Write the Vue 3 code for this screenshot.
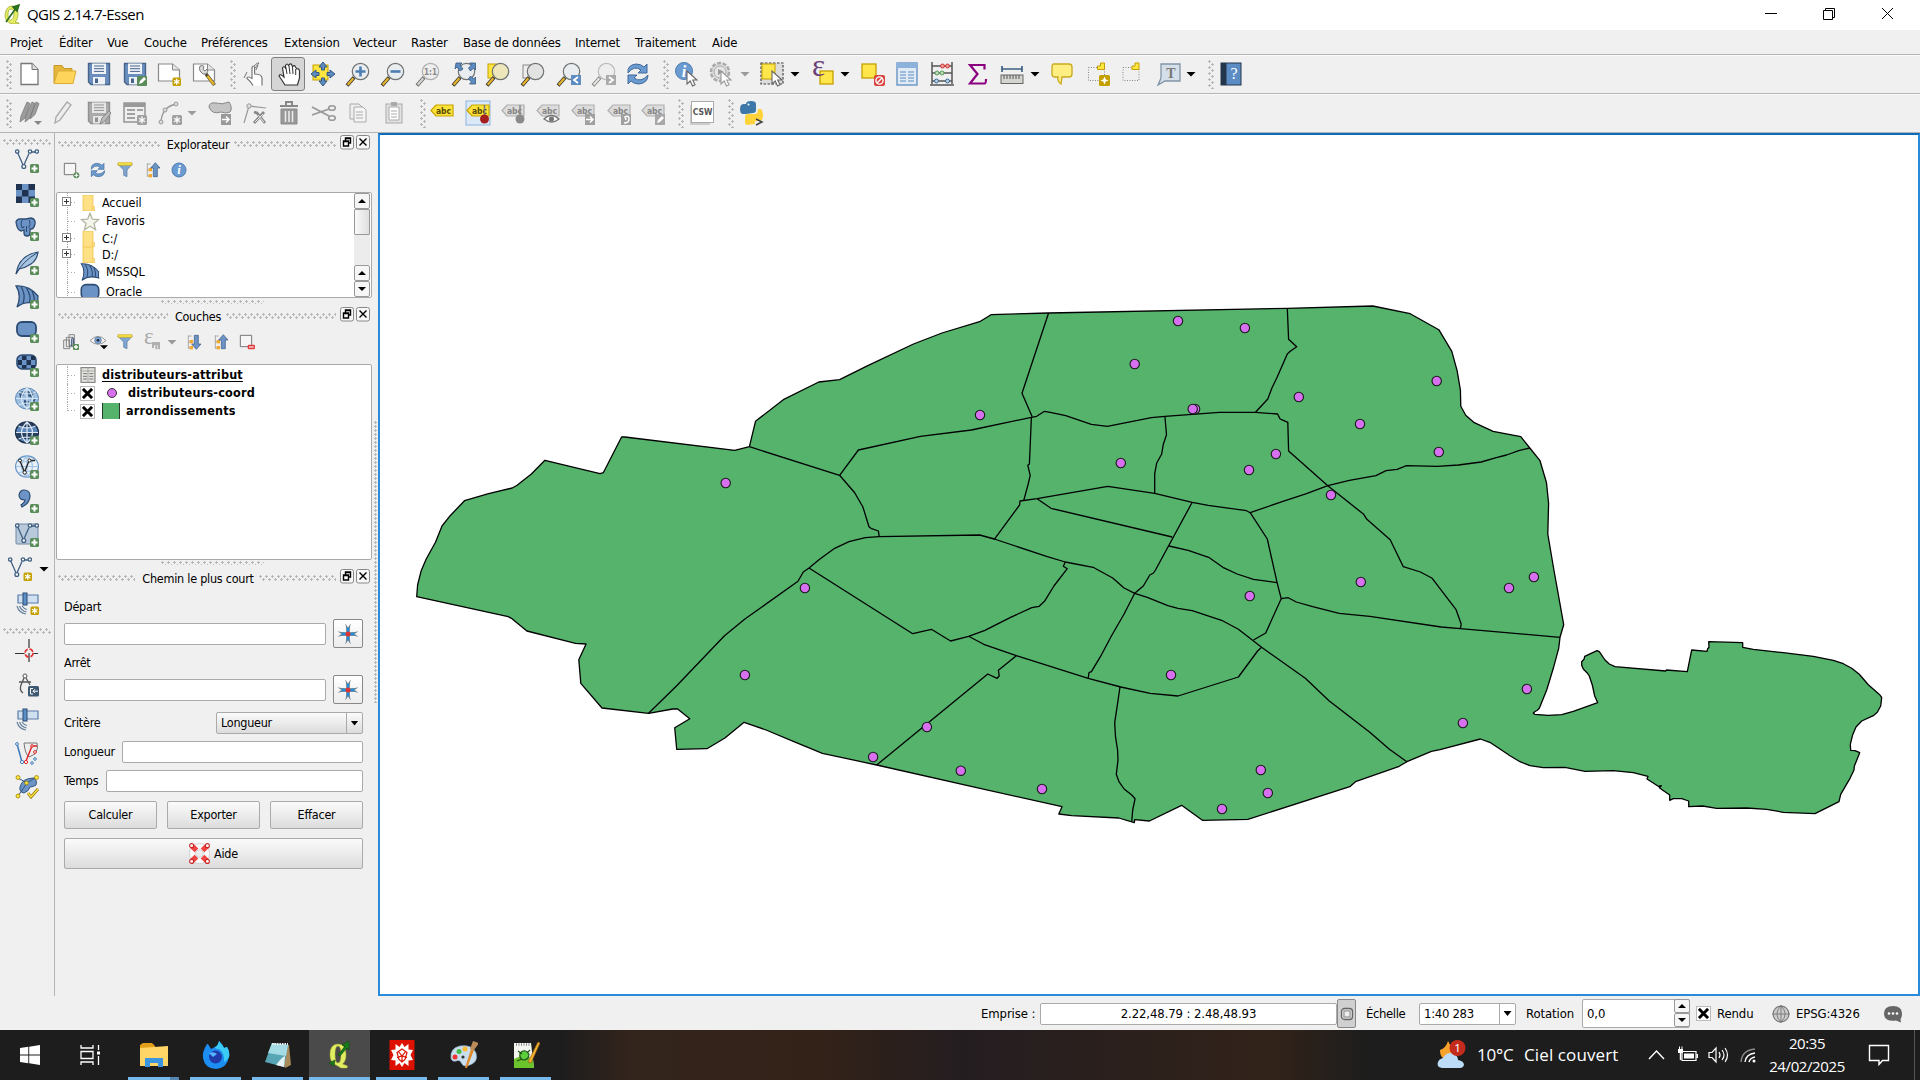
<script setup>
// ---------- map geometry ----------
// Each sheet is a digitised tile: origin on the page and horizontal / vertical scale.
const sheets = {
  A: [400, 290, 640 / 1568, 1 / 3],
  B: [980, 290, 640 / 1568, 1 / 3],
  C: [980, 540, 640 / 1568, 1 / 3],
  D: [1500, 620, 1 / 3, 1 / 3],
}
const place = (sheet, pair) => {
  const [ox, oy, sx, sy] = sheets[sheet]
  const [x, y] = pair.split(',').map(Number)
  return [+(ox + x * sx).toFixed(1), +(oy + y * sy).toFixed(1)]
}
const trace = (text) => {
  let sheet = 'A'
  const out = []
  for (const token of text.trim().split(/\s+/)) {
    if (sheets[token]) sheet = token
    else out.push(place(sheet, token).join(' '))
  }
  return 'M' + out.join('L')
}
const outline = trace(`A 41,920 43,885 52,842 64,808 74,785 87,757 103,708 123,677 158,632 217,611 275,594 287,586 322,552 355,511 490,551 498,548 543,441 551,441 820,481 856,470 871,394 939,329 1026,276 1077,269 1146,227 1258,162 1328,129 1420,95 1448,74
B 168,69 753,55 962,48 1054,71 1124,119 1156,184 1169,242 1177,300 1178,349 1190,376 1211,398 1257,424 1325,440 1347,474 1372,512 1388,578 1393,640 1391,732 1406,840
C 1430,254 1421,292
D 176,85 160,145 140,210 118,265 112,271 104,275 100,280 104,283 145,286 185,284 220,274 293,248 284,228 277,195 268,168 261,158 250,147 245,136 245,125 252,118 254,109 291,92 298,95 315,120 328,132 345,140 497,153 499,150 562,155 575,90 621,94 623,86 627,82 626,65 728,68 728,82 760,88 850,98 940,109 1000,121 1030,131 1055,145 1078,163 1105,194 1140,225 1145,233 1142,258 1132,277 1120,287 1085,303 1068,321 1058,344 1051,373 1052,391 1065,392 1079,398 1063,439 1062,450 1050,475 1022,523 1017,545 945,581 850,577 800,568 740,564 650,565 608,558 566,560 566,543 545,536 520,536 509,541 509,525 478,503 484,497 475,499 441,477 444,469 400,458 340,452 255,454 195,442 130,443 90,437 60,425 30,407 0,387
C 1249,607 1226,597 1127,629 1106,634 1046,665 1027,679 920,725 906,740 656,838 545,841 494,796 415,843 379,839 378,848 340,834 225,827 193,822 201,800 0,745
A 1168,1425 1035,1390 965,1355 897,1320 843,1297 796,1344 752,1376 678,1378 673,1313 710,1286 680,1257 668,1257 609,1270 495,1254 443,1180 438,1109 456,1062 430,1060 311,1023 273,985 265,980`) + 'Z'
const borders = [
  'A 856,470 1077,556 1114,608 1134,651 1149,710 1154,715 1172,723 1174,740',
  'A 1077,556 1123,480 1275,439 1400,420 1547,382 B 139,379 158,364 172,367 210,377 273,403 312,409 420,383 453,379 586,367 675,367 729,372 735,386 739,389 754,397 756,483 852,587 940,673 948,688 1005,749 1037,830 C 1079,96 1108,115 1166,208 1179,252 1177,265',
  'B 168,69 103,310 128,380',
  'B 753,55 756,148 776,170 760,184 753,192 728,262 715,295 705,327 675,367',
  'B 126,382 121,522 117,526 123,556 118,582 107,632',
  'B 453,379 457,434 449,463 445,493 433,519 428,551 428,610',
  'B 35,748 97,645 98,633 140,626 313,589 428,610 520,637 559,646 653,662 662,668 742,634 800,611 852,587 905,571 970,557 995,542 1022,538 1045,527 1120,529 1172,525 1228,516 1265,503 1290,495 1320,482 1347,474',
  'B 140,626 174,655 471,741',
  'B 520,637 430,840 C 425,99 416,105 400,138 379,160 353,222 322,288 295,350 273,395 267,398 265,415',
  'B 662,668 704,747 728,878 C 738,176 700,279 670,300',
  'C 463,18 510,31 560,52 595,82 630,102 670,118 728,128',
  'A 609,1270 678,1187 795,1037 845,987 975,874 988,846 1002,834 1028,808 1065,775 1100,755 1140,743 1174,740 1420,735 1456,747 C 165,50 209,66 277,82 325,114 353,144 379,160 410,172 460,197 485,205 520,212 592,241 633,268 690,322 797,415 855,482 955,577 1003,628 1046,665',
  'C 209,66 204,79 214,86 181,138 158,184 145,199 127,203 75,232 12,271 A 1393,1039 1349,1053 1302,1018 1256,1031 1002,834',
  'A 1393,1039 1430,1063 1510,1097 C 265,415 345,441 417,460 485,468 633,411 680,333 690,322',
  'A 1510,1097 1466,1141 1468,1158 1463,1165 1440,1152 1168,1425',
  'C 343,441 336,500 330,548 332,590 337,630 338,660 334,703 340,724 353,747 372,765 380,776 374,810 372,843',
  'C 738,176 755,173 775,186 815,200 880,220 955,229 1130,261 1177,266 1421,292',
].map(trace)
const dots = Object.entries({
  A: '1421,375 798,579 992,894 845,1155 1291,1311 1159,1401 1374,1442',
  B: '485,93 649,114 379,222 527,357 521,357 781,321 1119,273 931,402 1124,486 725,492 659,540 345,519 860,615',
  C: '661,168 933,126 1296,144 1357,111 1340,447 1183,549 468,405 688,690 705,759 593,807 152,747',
}).flatMap(([s, list]) => list.split(' ').map((p) => place(s, p)))

// ---------- icons (24 × 24 grid) ----------
const cross = '<rect x="15" y="15" width="9" height="9" rx="1.5" fill="#5a8c5a"/><path d="M19.5 16.5v6M16.500 19.5h6" stroke="#fff" stroke-width="2"/>'
const gold = '<rect x="15.500" y="15.500" width="8.500" height="8.500" rx="1.500" fill="#c4a000"/><path d="M19.700 16.700v6M17 18.200l5.400 3M22.400 18.200l-5.400 3" stroke="#fff" stroke-width="1.300"/>'
const grayStar = '<rect x="14" y="14" width="10" height="10" rx="1.5" fill="#a0a0a0"/><path d="M19 15.500v7M16 17.200l6 3.600M22 17.200l-6 3.600" stroke="#fff" stroke-width="1.300"/>'
const lens = (fill = '#e9edef', rim = '#6f7472', grip = '#e8b52c') =>
  `<path d="M1 23.500L8 15.500" stroke="#3c3c32" stroke-width="3.800"/><path d="M1.700 22.700L7.300 16.300" stroke="${grip}" stroke-width="2.100"/><circle cx="14.500" cy="9.500" r="8.200" fill="${fill}" stroke="${rim}" stroke-width="1.200"/>`
const arrowCursor = '<path d="M12 9v13l3.200-3 2.300 5 2.500-1.200-2.300-4.800h4.300z" fill="#fff" stroke="#666" stroke-width="1.100"/>'
const label = (fill, edge, ink) =>
  `<path d="M1 9.500L6 4h17v11H6z" fill="${fill}" stroke="${edge}" stroke-width="1.200"/><text x="13.500" y="12.700" text-anchor="middle" font-family="DejaVu Sans" font-weight="700" font-size="8.500" fill="${ink}">abc</text>`
const grayLabel = label('#dcdcdc', '#b0b0b0', '#858585')
const vline = (ink) =>
  `<path d="M2.500 3.500L8.500 17L14 4.500M16 3h5" fill="none" stroke="${ink}" stroke-width="1.300"/><g fill="#fff" stroke="${ink}" stroke-width="1.300"><circle cx="2.200" cy="2.500" r="1.700"/><circle cx="8.800" cy="17.500" r="1.900"/><circle cx="15" cy="2.500" r="1.700"/><circle cx="21.800" cy="2.500" r="1.700"/></g>`
const dish = '<path d="M3 4h20v8H3z" fill="#cfe0f0" stroke="#5b7da8" stroke-width="1.200"/><rect x="8" y="2" width="4" height="12" fill="#5b8fc6" stroke="#2c4b73"/><path d="M2 15q2 7 9 8M4.500 15q2 5 7 6M7 15q2 3 5 3.500" fill="none" stroke="#66809c" stroke-width="1.200"/>'
const disk = (a, b, c) =>
  `<path d="M1.500 1.500h21v21H4l-2.500-2.500z" fill="${a}" stroke="${b}" stroke-width="1.400"/><rect x="5" y="1.500" width="14" height="10.500" fill="${c}"/><path d="M7 4h10M7 6.700h10M7 9.400h10" stroke="${b}"/><rect x="6" y="15" width="12" height="7.500" fill="${c}"/><rect x="8" y="16.500" width="3" height="4.500" fill="${b}"/>`
const sheet = '<path d="M1.500 2h14l7 6v11h-21z" fill="#fff" stroke="#888" stroke-width="1.200"/><path d="M15.500 2v6h7" fill="#e4e4e4" stroke="#888"/>'
const elephant = '<path d="M1 5q1-4 6-3l4 0 5-1q5 1 4 6-1 4-3 5l-2 0v4q0 3-3 3-3 0-3-3l0-3-3 1q-4-1-5-9z" fill="#6b93c5" stroke="#2c4b73" stroke-width="1.300"/><path d="M7 3q-2 4 0 8 2 0 2-2M14.500 3q1.500 5-1 8M11.500 9v6" fill="none" stroke="#2c4b73"/>'
const sail = '<path d="M1 1q13-1 22 10-.500 5 0 8-13-4-21 3 5-12-1-21z" fill="#6b93c5" stroke="#2c4b73" stroke-width="1.300"/><path d="M6 1.500q5 8 2 17M11.500 3q5 8 3 14.500M17 6q3 6 2 11.500" fill="none" stroke="#2c4b73" stroke-width="1.300"/>'
const globeLines = (ink) =>
  `<path d="M12 1v21M1 11.500h22M3.500 5q8.500 4 17 0M3.500 18q8.500-4 17 0M12 1q-11 10.500 0 21M12 1q11 10.500 0 21" fill="none" stroke="${ink}" stroke-width="1.200"/>`
const funnel = '<path d="M1 3h22l-8 9v10l-5-2v-8z" fill="#7fa6d1" stroke="#53779f"/><path d="M1.500 1h21v4h-21z" fill="#f5e14a" stroke="#c4a000" stroke-width=".8"/>'
const refresh = '<path d="M2 11Q1 3 10 2q5 0 8 3l3-3v9h-9l3-3q-7-5-13 3z" fill="#6b9bd0" stroke="#41699a"/><path d="M22 13q0 8-9 9-5 0-8-3l-3 3v-9h9l-3 3q7 5 14-3z" fill="#6b9bd0" stroke="#41699a"/>'
const treeLines = '<path d="M5 2v20M5 3h5M5 12h5M5 21h5" stroke="#888" fill="none"/><g fill="#f4a82e"><rect x="7" y="9" width="5" height="5"/><rect x="7" y="18" width="5" height="5"/></g>'
const table = (line, bg, head) =>
  `<rect x="2" y="1" width="20" height="22" fill="${bg}" stroke="${line}" stroke-width="1.300"/><rect x="2" y="1" width="20" height="5" fill="${head}"/><path d="M5 10h6M13 10h6M5 13h6M13 13h6M5 16h6M13 16h6M5 19h6M13 19h6" stroke="${line}"/>`
const icons = {
  new: '<path d="M4 1.500h11l6 6v15H4z" fill="#fff" stroke="#777" stroke-width="1.300"/><path d="M15 1.500v6h6" fill="#ddd" stroke="#777"/>',
  open: '<path d="M2 21V3.500h8l2 3h8v4" fill="#e6b63a" stroke="#c69a28"/><path d="M2 21.500L6 9h18l-3 12.500z" fill="#ffd45a" stroke="#d9ad35"/>',
  save: disk('#6a8fbe', '#48648b', '#eef2f6'),
  saveas: disk('#6a8fbe', '#48648b', '#eef2f6') + '<rect x="14" y="14" width="10" height="10" rx="1" fill="#5a8c5a"/><path d="M16 22l1-3 4-4 2 2-4 4z" fill="#fff"/>',
  composer: sheet + gold,
  manager: sheet + '<path d="M9 5q3-1 4 .500l-1 3 2 1.500 2-2q2 3-1 5l-3 0-3-3q-1-3 0-5z" fill="#ddd" stroke="#777" transform="translate(-1 -1)"/><path d="M14 12l8.500 11" stroke="#55503a" stroke-width="3.600"/><path d="M15.500 14l6.500 8.500" stroke="#e8b52c" stroke-width="2.200"/>',
  touch: '<path d="M10 23.500q-2-4-6-7 0-3 5 0V5.500q1.200-3 2.600 0V12q7 0 7.400 4v7.500" fill="#fff" stroke="#777" stroke-width="1.200"/><path d="M11 4q4-4 5-3l-4 5M4 10L1 16M13 8l2-5" stroke="#777" fill="none"/>',
  hand: '<path d="M9 23q-3-5-6-9 1-3 5 1L6.500 6q1-2.500 3 0L9.500 3.500q1.500-3 3 0l.500-.500q2-2.500 3 .500l.500 1q2-2 3 .500l1.500 2q2-1 2.500 2v7l-2 7z" fill="#fff" stroke="#333" stroke-width="1.200"/><path d="M9.800 5l1.200 7M13 4l1 8M16.500 5l.500 7M19.700 7v6" stroke="#333"/>',
  panto: '<rect x="2" y="3" width="15" height="15" fill="#ffe640" stroke="#c4a000"/><path d="M12 0l4 5h-2.500v3h-3V5H8zM12 24l4-5h-2.500v-3h-3v3H8zM0 12l5-4v2.500h3v3H5V16zM24 12l-5-4v2.500h-3v3h3V16z" fill="#5d8cc2" stroke="#33567f"/>',
  zin: lens() + '<path d="M14.500 4.500v10M9.500 9.500h10" stroke="#4d7db3" stroke-width="2.600"/>',
  zout: lens() + '<path d="M9.500 9.500h10" stroke="#4d7db3" stroke-width="2.600"/>',
  z11: '<g opacity=".75">' + lens('#ededed', '#999', '#ccc') + '</g><text x="14.500" y="12.500" text-anchor="middle" font-family="DejaVu Sans" font-weight="700" font-size="8" fill="#888">1:1</text>',
  zfull: lens() + '<path d="M4 1h6L8 3l3 4-3 2-3-4-2 2zM23.500 1v7l-2-2-3 3-2-3 3-3-2-2zM23.500 22v-7l-2 2-3-3-2 3 3 3-2 2z" fill="#5d8cc2" stroke="#33567f" stroke-width=".8"/>',
  zsel: '<rect x="2" y="2" width="13" height="14" fill="#ffe640" stroke="#c4a000"/>' + lens('#eee6bb'),
  zlay: '<rect x="2" y="3" width="13" height="13" fill="#eee" stroke="#888"/>' + lens('#e2e2e2'),
  zlast: lens() + '<rect x="14" y="13" width="10" height="10" fill="#5d8cc2"/><path d="M21 15l-4 3 4 3" fill="none" stroke="#fff" stroke-width="1.800"/>',
  znext: '<g opacity=".6">' + lens('#eee', '#999', '#ddd') + '</g><rect x="14" y="13" width="10" height="10" fill="#aaa"/><path d="M17 15l4 3-4 3" fill="none" stroke="#fff" stroke-width="1.800"/>',
  refresh,
  identify: '<circle cx="9" cy="9" r="8.500" fill="#6b9bd0" stroke="#4d7db3"/><text x="9" y="14.500" text-anchor="middle" font-family="Liberation Serif" font-style="italic" font-weight="700" font-size="16" fill="#fff">i</text>' + arrowCursor,
  action: '<circle cx="11" cy="10" r="9" fill="#ddd" stroke="#aaa" stroke-width="2.500" stroke-dasharray="4 1.600"/><circle cx="11" cy="10" r="6" fill="#e6e6e6" stroke="#aaa"/><path d="M9 7l6 3-6 3z" fill="#999"/>' + arrowCursor.replace('#666', '#999'),
  select: '<rect x="1" y="1" width="22" height="21" fill="#ddd" stroke="#444" stroke-width="1.200" stroke-dasharray="2.500 1.500"/><rect x="2" y="2" width="13" height="15" fill="#ffe64a" stroke="#c4a000"/>' + arrowCursor,
  expr: '<rect x="9" y="9" width="13" height="13" fill="#ffe64a" stroke="#c4a000" stroke-width="1.300"/><text x="1" y="14" font-family="Liberation Serif" font-size="31" fill="#6b4177">ε</text>',
  desel: '<rect x="1" y="2" width="14" height="14" fill="#ffe64a" stroke="#c4a000" stroke-width="1.300"/><rect x="13" y="13" width="11" height="11" rx="2" fill="#d8433f"/><circle cx="18.500" cy="18.500" r="3.600" fill="none" stroke="#fff" stroke-width="1.400"/><path d="M16 21l5-5" stroke="#fff" stroke-width="1.400"/>',
  table: table('#5d8cc2', '#dfeaf5', '#8db3dc'),
  abacus: '<path d="M2 0v22M22 0v22M0 23h24M2 4h20M2 11h20M2 19h20" stroke="#555" stroke-width="1.500"/><g fill="#e99" stroke="#c33"><circle cx="12.500" cy="4" r="2"/><circle cx="17.500" cy="4" r="2"/></g><g fill="#bdb" stroke="#5a9a5a"><circle cx="7" cy="11" r="2"/><circle cx="12" cy="11" r="2"/></g><g fill="#bcd" stroke="#37699a"><circle cx="6.500" cy="19" r="2"/><circle cx="17.500" cy="19" r="2"/></g>',
  sum: '<path d="M19.500 7.500V3H5L12.500 12 5 21.500h14.500q1.500 0 1.500-4.500" fill="none" stroke="#8a007f" stroke-width="2.200"/>',
  ruler: '<path d="M2 4v6M22 4v6M2 7h20" stroke="#3d5f80" stroke-width="1.700"/><rect x="1" y="13" width="22" height="8.500" fill="#d5d5cf" stroke="#666"/><path d="M4 13v4M7 13v4M10 13v4M13 13v4M16 13v4M19 13v4" stroke="#555"/>',
  tip: '<path d="M5 2h15q3 0 3 3v7q0 3-3 3h-7l-1 7q-4-3-3-7H6q-3 0-3-3V5q0-3 2-3z" fill="#ffee82" stroke="#c9a81c" stroke-width="1.300"/>',
  bm1: '<rect x="2.500" y="5.500" width="16" height="13" fill="none" stroke="#888" stroke-dasharray="1 1.500"/><path d="M18.500 1h-4v3h-3v3.500h7z" fill="#ffe640" stroke="#c4a000"/><rect x="13" y="13" width="11" height="11" rx="1.500" fill="#c4a000"/><path d="M18.500 14.500l1.300 3 3 1-3 1-1.300 3-1.300-3-3-1 3-1z" fill="#fff"/>',
  bm2: '<rect x="4" y="5.500" width="16" height="13" fill="none" stroke="#888" stroke-dasharray="1 1.500"/><path d="M20 1h-4v3h-3v3.500h7z" fill="#ffe640" stroke="#c4a000"/>',
  note: '<path d="M4 2h19v17H8l-7 4 3-7z" fill="#d5dfe9" stroke="#8294a6" stroke-width="1.300"/><text x="14" y="15.500" text-anchor="middle" font-family="Liberation Serif" font-weight="700" font-size="14" fill="#777">T</text>',
  help: '<rect x="2" y="1" width="20" height="22" fill="#5c8cc4" stroke="#24364c"/><rect x="2" y="1" width="5.500" height="22" fill="#24364c"/><text x="15" y="17" text-anchor="middle" font-family="Liberation Serif" font-size="16" fill="#fff">?</text>',
  pencils: '<path d="M2 21l1-6L9 1l3 1.500L7 17zM7 21l1-6L14 1l3 1.500L12 17zM12 18l1-4L18 1l3 1.500-4 11z" fill="#9c9c9c" stroke="#7c7c7c" stroke-width=".8"/><path d="M16 20h8l-4 4z" fill="#888"/>',
  pencil: '<path d="M4 22l1-6L16 1l4 3L9 19z" fill="#eee" stroke="#aaa" stroke-width="1.300"/>',
  gsave: disk('#aaa', '#909090', '#e6e6e6') + '<path d="M13 23l2-6 7-7 2 2-6 8z" fill="#bbb" stroke="#888"/>',
  gtable: '<rect x="1" y="2" width="21" height="19" fill="#eee" stroke="#888" stroke-width="1.300"/><rect x="1" y="2" width="21" height="4" fill="#999"/><path d="M4 9h8M14 9h6M4 13h8M4 17h8" stroke="#888" stroke-width="1.500"/>' + grayStar,
  node: '<path d="M3 21Q4 6 18 3" fill="none" stroke="#999" stroke-width="1.300"/><g fill="#ddd" stroke="#999"><circle cx="3" cy="21" r="2"/><circle cx="7" cy="9" r="2"/><circle cx="18" cy="3" r="2"/></g>' + grayStar,
  move: '<path d="M1 6q0-5 7-4 6 2 13-1 4 6 1 10-4 2-9 0-9 3-12-5z" fill="#c4c4c4" stroke="#888"/><rect x="13" y="13" width="10" height="11" fill="#999"/><path d="M14 18.500h7M18 15.500l3 3-3 3" fill="none" stroke="#fff" stroke-width="1.500"/>',
  nodes: '<path d="M1 22L6 5l17 2" stroke="#999" fill="none" stroke-width="1.200"/><circle cx="6" cy="5" r="2.200" fill="#ddd" stroke="#999"/><path d="M11 11l3 1 8 10M21 11L11 22" stroke="#888" stroke-width="2.800" fill="none"/><path d="M15 14l6 7M20 13l-8 8" stroke="#e4e4e4" fill="none"/>',
  trash: '<path d="M3 5h18M9 4V1h6v3" fill="none" stroke="#888" stroke-width="2"/><path d="M4 8h16v15H4z" fill="#999" stroke="#8a8a8a"/><path d="M8.500 10v11M12 10v11M15.500 10v11" stroke="#eee" stroke-width="1.500"/>',
  cut: '<path d="M0 6l17 9M0 14l17-6" stroke="#999" stroke-width="1.800"/><g fill="none" stroke="#999" stroke-width="1.600"><ellipse cx="20" cy="7" rx="3.300" ry="2.300"/><ellipse cx="20" cy="17" rx="3.300" ry="2.300"/></g>',
  copy: '<path d="M4 3h9l3 3v12H4z" fill="#eee" stroke="#aaa"/><path d="M8 6h9l3 3v12H8z" fill="#f5f5f5" stroke="#aaa"/><path d="M10 11h7M10 14h7M10 17h7" stroke="#aaa"/>',
  paste: '<rect x="4" y="3" width="16" height="19" fill="#e2e2e2" stroke="#aaa"/><rect x="9" y="1" width="6" height="4" fill="#aaa"/><path d="M7 6h10v13H7z" fill="#fff" stroke="#aaa"/><path d="M9 10h6M9 13h6M9 16h6" stroke="#aaa"/>',
  lab1: label('#fbe33a', '#c9a400', '#5a4a00'),
  lab2: '<rect x="0" y="0" width="24" height="24" fill="#dbe8f7" stroke="#8bb3e0"/>' + label('#fbe33a', '#c9a400', '#5a4a00') + '<path d="M18.500 4v12" stroke="#777" stroke-width="1.500"/><circle cx="18.500" cy="18" r="4.500" fill="#a51d1d"/>',
  lab3: grayLabel + '<path d="M19 4v12" stroke="#888" stroke-width="1.500"/><circle cx="19" cy="18" r="4.500" fill="#8b8b8b"/>',
  lab4: grayLabel + '<path d="M8 18q7-7 15 0-7 6-15 0z" fill="#fff" stroke="#777" stroke-width="1.300"/><circle cx="15.500" cy="18" r="2.600" fill="#777"/>',
  lab5: grayLabel + '<rect x="14" y="13" width="10" height="11" fill="#a0a0a0"/><path d="M15 18.500h7M19 15.500l3 3-3 3" fill="none" stroke="#fff" stroke-width="1.500"/>',
  lab6: grayLabel + '<rect x="14" y="13" width="10" height="11" fill="#a0a0a0"/><path d="M17 22q5 0 5-4t-4-2l1 3" fill="none" stroke="#fff" stroke-width="1.500"/>',
  lab7: grayLabel + '<rect x="14" y="13" width="10" height="11" fill="#a8a8a8"/><path d="M16 22l1-3 4-4 2 2-4 4z" fill="#fff"/>',
  csw: '<rect x="0" y="4" width="20" height="20" fill="#ccc"/><rect x="1.500" y="0.500" width="22" height="21" fill="#fff" stroke="#aaa"/><text x="12.500" y="14" text-anchor="middle" font-family="DejaVu Sans Condensed" font-weight="700" font-size="8.500" fill="#555">CSW</text>',
  python: '<path d="M6 12H3q-3 0-3-5t4-5h2q0-3 5-3t5 3v6q0 3-3 3z" fill="#3d78a9" transform="translate(0 1)"/><circle cx="8.500" cy="3.400" r="1" fill="#fff"/><path d="M7 24q-2 0-2-3v-5q0-3 3-3h7q3 0 3-5h3q2 2 2 7t-4 5h-4v3z" fill="#ffd43b"/><path d="M16 18l6 3-6 3" fill="none" stroke="#444" stroke-width="1.500"/>',
  vec: vline('#3f5f83') + cross,
  ras: '<path d="M1 1h19v19H1z" fill="#6b93c5"/><path d="M1 1h6v6H1zM13.500 1H20v6h-6.500zM7 7h6.500v6.500H7zM1 13.500h6V20H1zM13.500 13.500H20V20h-6.500z" fill="#1f3350"/>' + cross,
  pg: elephant + cross,
  feather: '<path d="M1 23Q4 4 23 1q-1 8-7 12T4 18z" fill="#a8c5e2" stroke="#2c4b73" stroke-width="1.200"/><path d="M1 23Q8 10 22 2" stroke="#2c4b73" fill="none"/>' + cross,
  sail: sail + cross,
  sailPlain: sail,
  ora: '<rect x="2" y="3" width="19" height="14" rx="5" fill="#6b93c5" stroke="#2c4b73" stroke-width="1.800"/>' + cross,
  oraPlain: '<rect x="1" y="2" width="22" height="18" rx="6" fill="#6b93c5" stroke="#2c4b73" stroke-width="2"/>',
  oraRas: '<rect x="2" y="2" width="19" height="14" rx="5" fill="#6b93c5" stroke="#2c4b73" stroke-width="1.600"/><path d="M7 3h4.500v4H7zM16 3h4v4h-4zM3 7h4v5H3zM11.500 7H16v5h-4.500zM7 12h4.500v3.500H7zM16 12h4v3h-4z" fill="#1f3350"/>' + cross,
  wms: '<ellipse cx="12" cy="11.500" rx="11.500" ry="10.500" fill="#9dbfe0" stroke="#5b86b5"/><path d="M4 5l6-1-2 5-3 2zM12 4l7 1-2 6-4-2zM9 13l5 1-2 6-3-3zM18 13l3-2-2 5z" fill="#33557d"/>' + globeLines('#d7e6f4') + cross,
  wcs: '<ellipse cx="12" cy="11.500" rx="11.500" ry="10.500" fill="#5d86b8" stroke="#1f3350" stroke-width="1.500"/><path d="M4 4q8-5 16 0l1 2H3zM1 12h22q-1 4-3 6H4q-3-3-3-6z" fill="#1f3350" opacity=".85"/>' + globeLines('#dce8f4') + cross,
  wfs: '<ellipse cx="12" cy="11.500" rx="11.500" ry="10.500" fill="#e8f0f8" stroke="#6d9bcc" stroke-width="1.300"/>' + globeLines('#a4c3e3') + '<path d="M5 6l4.500 11L14 6M15 5.500h5" fill="none" stroke="#222" stroke-width="1.300"/><g fill="#fff" stroke="#222"><circle cx="5" cy="5.500" r="1.500"/><circle cx="9.700" cy="17.500" r="1.700"/><circle cx="14.500" cy="5.500" r="1.500"/></g>' + cross,
  comma: '<path d="M4 6q1-5 5-5 6 0 6 6 0 7-8 11l-1-2q4-3 4-5-6 0-6-5z" fill="#6b93c5" stroke="#2c4b73" stroke-width="1.200"/>' + cross,
  virt: '<rect x="1" y="1" width="22" height="20" rx="1" fill="#b7c9da" stroke="#6f8aa6"/>' + vline('#3f5f83') + cross,
  shp: vline('#3f5f83') + gold,
  gpsnew: dish + gold,
  gps: dish,
  aim: '<path d="M14 0v9M14 14v9M0 14.500h9.500M18 14.500h5" stroke="#333" stroke-width="1.200"/><circle cx="14" cy="14" r="4" fill="none" stroke="#d33" stroke-width="1.600" stroke-dasharray="4.500 1.800"/>',
  compass: '<circle cx="10" cy="3" r="2" fill="#fff" stroke="#555"/><path d="M9 5L6 12q-2 5 2 8M11 5l4 7M4 9h12" fill="none" stroke="#555" stroke-width="1.300"/><rect x="13" y="13" width="11" height="10.500" rx="1.500" fill="#3d5870"/><path d="M18 15.500h-2.500v5.500h2.500M23 18.200h-5l2-2M18 18.200l2 2" stroke="#fff" fill="none"/>',
  topo: '<path d="M2 3l5 18" stroke="#3a78b8" stroke-width="1.500"/><path d="M9 2h13q2 5-2 11l-6 3q-4-3-5-14z" fill="#eee" stroke="#777"/><path d="M11 20L17 5h5" stroke="#d22" fill="none" stroke-width="1.400"/><g fill="#fff" stroke="#3a78b8"><circle cx="2" cy="3" r="1.400"/><circle cx="7" cy="21" r="1.600"/><circle cx="17" cy="22" r="1.300"/><circle cx="20" cy="18" r="1.300"/></g><g fill="#fff" stroke="#d22"><circle cx="11" cy="21" r="1.600"/><circle cx="20" cy="11" r="1.400"/><circle cx="17" cy="5" r="1.300"/></g>',
  check: '<path d="M5 12Q7 3 19 3q4 3 2 7-3 2-6 2-1 4-6 6-5-1-4-6z" fill="#6b93c5" stroke="#33567f"/><path d="M3 3l9 5 9-6M3 21l9-13" stroke="#33567f" fill="none"/><g fill="#ffe640" stroke="#a08300" stroke-width=".8"><circle cx="3" cy="2.500" r="2"/><circle cx="21.500" cy="2.500" r="2"/><circle cx="11.500" cy="8" r="1.800"/><circle cx="3" cy="21" r="2"/></g><path d="M13 18l3 4 7-8" stroke="#8a7000" stroke-width="2.800" fill="none"/><path d="M13 18l3 4 7-8" stroke="#ffe640" stroke-width="1.400" fill="none"/>',
  addsel: '<path d="M2 2h17v17H2z" fill="#f5f5f5" stroke="#777" stroke-width="1.500"/><circle cx="20" cy="20" r="4.500" fill="#5a8c5a"/><path d="M20 17v6M17 20h6" stroke="#fff" stroke-width="1.500"/>',
  funnel,
  collapse: treeLines + '<path d="M17 1l7 8h-4v13h-6V9h-4z" fill="#6b93c5" stroke="#33567f"/>',
  expand: treeLines + '<path d="M17 23l7-8h-4V2h-6v13h-4z" fill="#6b93c5" stroke="#33567f"/>',
  info: '<circle cx="12" cy="12" r="10.500" fill="#6b9bd0" stroke="#4d7db3" stroke-width="1.500"/><text x="12" y="18.500" text-anchor="middle" font-family="Liberation Serif" font-style="italic" font-weight="700" font-size="19" fill="#fff">i</text>',
  group: '<path d="M1 9h9v13H1zM5 5h10v14H5zM9 1h8v16H9z" fill="#eee" stroke="#777" stroke-width="1.300"/><path d="M13 18V7q2-3 3 0v11" stroke="#33567f" fill="none" stroke-width="1.500"/>' + cross,
  eye: '<path d="M0 10q12-13 24 0-12 11-24 0z" fill="#f4f4f4" stroke="#999" stroke-width="1.500"/><circle cx="12" cy="9.500" r="5" fill="#7fa6d1" stroke="#4d6f99"/><circle cx="12" cy="9.500" r="2" fill="#223"/><path d="M15 17h12l-6 6z" fill="#000"/>',
  gexpr: '<text x="0" y="15" font-family="Liberation Serif" font-size="34" fill="#aaa">ε</text><path d="M12 12h12v11h-3v-6h-1v6h-3v-6h-2v4h-3z" fill="#b0b0b0"/>',
  remove: '<path d="M2 2h17v17H2z" fill="#f5f5f5" stroke="#777" stroke-width="1.500"/><rect x="13" y="16" width="11" height="7" rx="2" fill="#e23d3d"/><path d="M15 19.500h7" stroke="#fff" stroke-width="1.600"/>',
  capture: '<path d="M10 2l2 3 2-3-.500 9h-3zM10 22l2-3 2 3-.500-9h-3zM2 10l3 2-3 2 9-.500v-3zM22 10l-3 2 3 2-9-.500v-3z" fill="#1d8fe0" stroke="#5b7184" stroke-width=".8"/><path d="M10 2L9 .500M14 2l1-1.500M10 22l-1 1.500M14 22l1 1.500M2 10L.500 9M2 14l-1.500 1M22 10l1.500-1M22 14l1.500 1" stroke="#667"/><circle cx="12" cy="12" r="3" fill="#e03434"/>',
  buoy: '<circle cx="12" cy="12" r="8" fill="none" stroke="#fafafa" stroke-width="7"/><circle cx="12" cy="12" r="11.500" fill="none" stroke="#c4c4c4" stroke-width=".8"/><circle cx="12" cy="12" r="4.500" fill="none" stroke="#c4c4c4" stroke-width=".7"/><path d="M3.500 3.500l5 5M20.500 3.500l-5 5M3.500 20.500l5-5M20.500 20.500l-5-5" stroke="#ee4444" stroke-width="6"/><g fill="#fff" stroke="#c22" stroke-width="1.200"><circle cx="3" cy="3" r="2.300"/><circle cx="21" cy="3" r="2.300"/><circle cx="3" cy="21" r="2.300"/><circle cx="21" cy="21" r="2.300"/></g>',
  folder: '<path d="M3 0h15v17h2v7H3z" fill="#ffe084" stroke="#efc34f" stroke-width="1.200"/><path d="M17 17v6" stroke="#efc34f"/>',
  star: '<path d="M12 1.500l3 7.500 8 .5-6 5 2 8-7-4.500L5 22.500l2-8-6-5L9 9z" fill="#f4f6ee" stroke="#b4b8a2" stroke-width="1.700"/>',
  grayTable: '<rect x="1.500" y="1" width="21" height="22" fill="#e4e4e0" stroke="#777" stroke-width="1.600"/><path d="M2 6h20M12 1v22" stroke="#999" stroke-width="1.300"/><path d="M4.500 10h6M14 10h6M4.500 14h6M14 14h6M4.500 18h6M14 18h6" stroke="#777" stroke-width="1.500"/>',
}

// ---------- toolbars: name + horizontal centre ----------
const wide = { grip: 6, down: 10, downg: 10 }
const spread = (items, start = 0) => {
  let edge = start
  return items.map(([name, centre, extra]) => {
    const w = wide[name] ?? (extra ? 34 : 24)
    const gap = centre - w / 2 - edge
    edge = centre + w / 2
    return { name, active: !!extra, gap: gap + 'px' }
  })
}
const fileBar = spread([
  ['grip', 9], ['new', 29], ['open', 64], ['save', 99], ['saveas', 135], ['composer', 169], ['manager', 204],
  ['grip', 233], ['touch', 255], ['hand', 288, true], ['panto', 323], ['zin', 358], ['zout', 393], ['z11', 428],
  ['zfull', 464], ['zsel', 498], ['zlay', 533], ['zlast', 569], ['znext', 604], ['refresh', 638],
  ['grip', 666], ['identify', 687], ['action', 721], ['downg', 745], ['select', 772], ['down', 795],
  ['expr', 823], ['down', 845], ['desel', 873], ['table', 907], ['abacus', 942], ['sum', 977], ['ruler', 1012],
  ['down', 1035], ['tip', 1061], ['bm1', 1098], ['bm2', 1131], ['note', 1169], ['down', 1191], ['grip', 1211], ['help', 1231],
])
const editBar = spread([
  ['grip', 9], ['pencils', 30], ['pencil', 63], ['gsave', 99], ['gtable', 135], ['node', 170], ['downg', 192],
  ['move', 220], ['nodes', 255], ['trash', 289], ['cut', 324], ['copy', 358], ['paste', 394], ['grip', 423],
  ['lab1', 442], ['lab2', 478], ['lab3', 513], ['lab4', 548], ['lab5', 583], ['lab6', 619], ['lab7', 653],
  ['grip', 681], ['csw', 702], ['grip', 731], ['python', 752],
])
const sideTop = ['vec', 'ras', 'pg', 'feather', 'sail', 'ora', 'oraRas', 'wms', 'wcs', 'wfs', 'comma', 'virt', 'shp', 'gpsnew']
const sideBottom = ['aim', 'compass', 'gps', 'topo', 'check']
const menus = [['Projet', 49], ['Éditer', 48], ['Vue', 37], ['Couche', 57], ['Préférences', 83], ['Extension', 69], ['Vecteur', 58], ['Raster', 52], ['Base de données', 112], ['Internet', 60], ['Traitement', 77], ['Aide', 40]]
  .map(([text, w]) => ({ text, w: w + 'px' }))
const tree = [
  ['Accueil', 'folder', 1, 19], ['Favoris', 'star', 0, 18], ['C:/', 'folder', 1, 17],
  ['D:/', 'folder', 1, 15], ['MSSQL', 'sailPlain', 0, 20], ['Oracle', 'oraPlain', 0, 20],
].map(([text, icon, open, h]) => ({ text, icon, open, h: h + 'px' }))
</script>

<template>
  <div class="win">
    <header class="title">
      <svg class="logo" viewBox="0 0 16 20"><path d="M8 2q6 0 6 7t-3 9l4 1v1H9Q1 19 1 11 2 2 8 2z" fill="#e4ec62" stroke="#9aa52c" stroke-width=".7" /><path d="M7 5q3 0 3 5t-3 6-3-5 3-6z" fill="#fff" stroke="#9aa52c" stroke-width=".7" /><path d="M2 18L12 4M9 3l6-2-2 6z" stroke="#2a6b1e" stroke-width="1.600" fill="#2a7d1e" /></svg>
      <span class="name">QGIS 2.14.7-Essen</span>
      <svg class="wbtn" viewBox="0 0 150 20"><path d="M0 9.500h12M58.500 6.500h9v9h-9zM60.500 6V4.500h9v9H68M117 4l11 11M128 4l-11 11" fill="none" stroke="#000" stroke-width="1" /></svg>
    </header>
    <nav class="menu"><span v-for="m in menus" :key="m.text" :style="{ width: m.w }">{{ m.text }}</span></nav>

    <div v-for="(bar, b) in [fileBar, editBar]" :key="b" class="bar">
      <template v-for="(t, i) in bar" :key="i">
        <i v-if="t.name === 'grip'" class="grip-v" :style="{ marginLeft: t.gap }"></i>
        <i v-else-if="t.name === 'down' || t.name === 'downg'" class="down" :class="{ dim: t.name === 'downg' }" :style="{ marginLeft: t.gap }"></i>
        <span v-else class="tool" :class="{ active: t.active }" :style="{ marginLeft: t.gap }"><svg viewBox="0 0 24 24" v-html="icons[t.name]"></svg></span>
      </template>
    </div>

    <main class="work">
      <aside class="side">
        <i class="grip-h"></i>
        <span v-for="n in sideTop" :key="n" class="stool" :class="{ split: n === 'shp' }"><svg viewBox="0 0 24 24" v-html="icons[n]"></svg><i v-if="n === 'shp'" class="down"></i></span>
        <i class="grip-h second"></i>
        <span v-for="n in sideBottom" :key="n" class="stool"><svg viewBox="0 0 24 24" v-html="icons[n]"></svg></span>
      </aside>

      <section class="docks">
        <div class="dtitle"><i class="grip-h"></i><b>Explorateur</b><i class="grip-h"></i><svg class="dbtns" viewBox="0 0 31 15"><use href="#dock-buttons" /></svg></div>
        <div class="dtools"><svg v-for="n in ['addsel', 'refresh', 'funnel', 'collapse', 'info']" :key="n" viewBox="0 0 24 24" v-html="icons[n]"></svg></div>
        <div class="box explorer">
          <div class="tree">
            <div v-for="r in tree" :key="r.text" class="row" :style="{ height: r.h }">
              <span class="branch"><i v-if="r.open" class="plus"></i></span>
              <svg class="ticon" :class="{ big: !r.open }" viewBox="0 0 24 24" v-html="icons[r.icon]"></svg>
              <span>{{ r.text }}</span>
            </div>
          </div>
          <div class="scroll">
            <i class="sb up"></i><i class="thumb"></i><i class="track"></i><i class="sb up"></i><i class="sb dn"></i>
          </div>
        </div>
        <i class="grip-h mid"></i>
        <div class="dtitle two"><i class="grip-h"></i><b>Couches</b><i class="grip-h"></i><svg class="dbtns" viewBox="0 0 31 15"><use href="#dock-buttons" /></svg></div>
        <div class="dtools two">
          <svg v-for="n in ['group', 'eye', 'funnel', 'gexpr']" :key="n" viewBox="0 0 24 24" v-html="icons[n]"></svg>
          <i class="down dim"></i>
          <svg v-for="n in ['expand', 'collapse', 'remove']" :key="n" viewBox="0 0 24 24" v-html="icons[n]"></svg>
        </div>
        <div class="box layers">
          <div class="row"><span class="branch"></span><svg class="lic" viewBox="0 0 24 24" v-html="icons.grayTable"></svg><u>distributeurs-attribut</u></div>
          <div class="row"><span class="branch"></span><span class="chk"><svg viewBox="0 0 12 12"><path d="M1 1l10 10M11 1L1 11" stroke="#000" stroke-width="3.200" /></svg></span><i class="pin"></i><span>distributeurs-coord</span></div>
          <div class="row last"><span class="branch"></span><span class="chk"><svg viewBox="0 0 12 12"><path d="M1 1l10 10M11 1L1 11" stroke="#000" stroke-width="3.200" /></svg></span><i class="swatch"></i><span>arrondissements</span></div>
        </div>
        <i class="grip-h mid low"></i>
        <div class="dtitle three"><i class="grip-h"></i><b>Chemin le plus court</b><i class="grip-h"></i><svg class="dbtns" viewBox="0 0 31 15"><use href="#dock-buttons" /></svg></div>
        <div class="form">
          <label class="cap">Départ</label>
          <div class="line tall"><i class="field"></i><span class="btn cap-btn"><svg viewBox="0 0 24 24" v-html="icons.capture"></svg></span></div>
          <label class="cap second">Arrêt</label>
          <div class="line tall"><i class="field"></i><span class="btn cap-btn"><svg viewBox="0 0 24 24" v-html="icons.capture"></svg></span></div>
          <div class="line crit"><label>Critère</label><span class="btn combo">Longueur<i class="arrow"><i class="down"></i></i></span></div>
          <div class="line"><label>Longueur</label><i class="field len"></i></div>
          <div class="line"><label>Temps</label><i class="field tmp"></i></div>
          <div class="acts"><span class="btn">Calculer</span><span class="btn">Exporter</span><span class="btn">Effacer</span></div>
          <span class="btn aide"><svg viewBox="0 0 24 24" v-html="icons.buoy"></svg>Aide</span>
        </div>
      </section>
      <i class="vsplit"></i>

      <section class="canvas">
        <svg viewBox="380 135 1538 859" width="1538" height="859">
          <path :d="outline" class="land" />
          <path v-for="(d, i) in borders" :key="i" :d="d" class="edge" />
          <circle v-for="(p, i) in dots" :key="i" :cx="p[0]" :cy="p[1]" r="4.700" class="dot" />
        </svg>
      </section>
    </main>

    <footer class="status">
      <span class="s1">Emprise :</span><span class="fld extent">2.22,48.79 : 2.48,48.93</span>
      <span class="btn ext"><svg viewBox="0 0 14 14"><rect x="1.500" y="1.500" width="11" height="11" rx="3" fill="#ddd" stroke="#666" stroke-width="1.300" /><rect x="4" y="4" width="6" height="6" fill="#eee" stroke="#888" /></svg></span>
      <span class="s2">Échelle</span><span class="fld scale">1:40 283<i class="arrow"><i class="down"></i></i></span>
      <span class="s3">Rotation</span><span class="fld rot">0,0<i class="spin"><i class="sb up"></i><i class="sb dn"></i></i></span>
      <span class="chk"><svg viewBox="0 0 12 12"><path d="M1 1l10 10M11 1L1 11" stroke="#000" stroke-width="3.200" /></svg></span><span class="s4">Rendu</span>
      <svg class="crs" viewBox="0 0 24 24"><circle cx="12" cy="12" r="10.500" fill="#ccc" stroke="#777" stroke-width="1.500" /><path d="M12 0v24M0 12h24M12 1q-11 11 0 22M12 1q11 11 0 22" fill="none" stroke="#777" stroke-width="1.200" /></svg>
      <span class="s5">EPSG:4326</span>
      <svg class="msg" viewBox="0 0 20 18"><path d="M10 1q9 0 9 7.500 0 4-1.500 5.500l.5 3.500-5-2Q1 17 1 8.500 1 1 10 1z" fill="#666" /><g fill="#fff"><circle cx="6" cy="8.500" r="1.300" /><circle cx="10" cy="8.500" r="1.300" /><circle cx="14" cy="8.500" r="1.300" /></g></svg>
    </footer>

    <footer class="task">
      <span class="t win-ic"><svg viewBox="0 0 20 20"><path d="M0 3l8.300-1.200v7.700H0zM9.200 1.700L20 0v9.500H9.200zM0 10.500h8.300v7.700L0 17zM9.200 10.500H20V20L9.200 18.300z" fill="#fff" /></svg></span>
      <span class="t view-ic"><svg viewBox="0 0 20 20"><path d="M1 0v3h12V0M1 20v-3h12v3M1 6.500h12v7H1zM18.500 0v5M18.500 11v9" fill="none" stroke="#fff" stroke-width="1.300" /><path d="M17 6.500h3v3h-3z" fill="#fff" /></svg></span>
      <span class="t app exp"><svg viewBox="0 0 28 28"><path d="M0 4l3-2h9l3 3v4H0z" fill="#e2a01a" /><path d="M0 7q14-1 28-2v20H0z" fill="#ffd567" /><path d="M5 26v-9h18v9h-5v-4h-8v4z" fill="#3b95df" /></svg></span>
      <span class="t app"><svg viewBox="0 0 28 28"><path d="M6 3l3 5 4-2q3-1 4-6 4 4 5 7l3-1q3 5 2 10-2 11-13 12Q3 28 1 17q-1-6 4-14z" fill="#1c8df2" /><path d="M17 0q4 4 5 7l3-1q3 5 2 10-2 4-5 5 1-9-5-13-4 0-4-2 3-1 4-6z" fill="#3ccbf4" /><circle cx="13.500" cy="16" r="6.500" fill="#1f3aa8" /><path d="M7 12q5-2 8 1l-4 3z" fill="#54b4ff" /></svg></span>
      <span class="t app"><svg viewBox="0 0 28 28"><path d="M8 3l17 1 2 20-6 3z" fill="#a68a5a" /><path d="M8 2l16 2-4 22L1 21z" fill="#58a5b5" /><path d="M8 2l16 2-2 11L4 12z" fill="#a5dbe4" /><path d="M12 24q6-8 9-9l-1 11z" fill="#e8f2f4" /><path d="M8 3h16" stroke="#eee" stroke-width="2" stroke-dasharray="1.500 1" /></svg></span>
      <span class="t app cur"><svg viewBox="0 0 28 28"><path d="M12 3q8 0 8 10.500 0 7-3.500 9.500l5 2-.5 2h-6q-3-2-5-3Q4 22 4 13.500 4 3 12 3zM12 5q-3 0-3 8.500T12 22t3-8.500T12 5z" fill="#e2ee62" fill-rule="evenodd" stroke="#a9b433" stroke-width=".5" /><path d="M12 14l7-9-3-1 7-4v9l-2-2-7 8zM3 22l6-3-1 6z" fill="#1a7a1a" stroke="#0f4a0f" stroke-width=".6" /></svg></span>
      <span class="t app"><svg class="tall-ic" viewBox="0 0 25 30"><path d="M0 0h25v30H0z" fill="#dd1100" /><path d="M12.500 3l2.500 4 4-3 0 5.500 4.500.500-2.500 5 2.500 5-4.500.500 0 5.500-4-3-2.500 4-2.500-4-4 3 0-5.500-4.500-.500 2.500-5-2.500-5 4.500-.500L6 4l4 3z" fill="#fff" /><path d="M12.500 9l5 3.500-2 7-3 2.500-3-2.500-2-7zM8.500 11l4 5 4-5M12.500 16v5M7.500 17.500l5-1.500 5 1.500" fill="none" stroke="#dd1100" stroke-width="1.200" /></svg></span>
      <span class="t app"><svg viewBox="0 0 28 28"><path d="M1 17Q0 7 10 5q12-2 16 7 2 8-4 11-8 4-10 0-2-5-6-3-4 1-5-3z" fill="#c9dff0" stroke="#8fb0cc" stroke-width=".7" /><circle cx="5" cy="16" r="2.500" fill="#e33" /><circle cx="9" cy="10.500" r="2.500" fill="#4b4" /><circle cx="15" cy="8" r="2.500" fill="#fb3" /><circle cx="13" cy="16" r="1.600" fill="#333" /><path d="M15 27l6-19 3 1-7 18z" fill="#e08a2c" /><path d="M20 8l3-8 6 2-5 7z" fill="#b98a5a" /></svg></span>
      <span class="t app"><svg viewBox="0 0 28 28"><path d="M2 2h17l3 25H2z" fill="#f4f7f0" /><path d="M2 18q10-6 19 0l1 9H2z" fill="#6cc42c" /><path d="M4 3.500h15" stroke="#888" stroke-width="2.500" stroke-dasharray="1 1.500" /><path d="M8 12q5-5 9 1 0 6-6 6-4-2-3-7zM6 10l4 3M18 9l-3 3M5 20l5-2" fill="#5bd03c" stroke="#1d4f16" stroke-width="1.100" /><path d="M16 21L26 1l2 1-9 20z" fill="#f0b52c" stroke="#9c5a18" stroke-width=".7" /></svg></span>
      <span class="weather"><svg viewBox="0 0 30 32"><path d="M12 2q-2 7-8 9 0 6 3 8l12-4z" fill="#f7a32a" /><path d="M6 29q-6-1-4-6 1-3 5-4 4-7 11-4 4 2 4 6 6 1 6 5-1 3-4 3z" fill="#bcdcf8" /><circle cx="21.500" cy="9" r="8" fill="#c42b1c" /><text x="21.500" y="13" text-anchor="middle" font-family="Noto Sans" font-size="11.500" fill="#fff">1</text></svg></span>
      <span class="wtext">10°C</span><span class="wtext sky">Ciel couvert</span>
      <svg class="tray" viewBox="0 0 120 24"><path d="M1 16l7.500-8 7.500 8" fill="none" stroke="#fff" stroke-width="1.400" /><path d="M34 8.500h14v9H34z" fill="none" stroke="#fff" stroke-width="1.200" /><path d="M36 10.500h10v5H36zM48.500 11h1.500v4h-1.500zM30 6h5v4h-1.800v7h-1.400v-7H30zM31 3.500h1V6h-1zM33.500 3.500h1V6h-1z" fill="#fff" /><path d="M61 9.500h3l4-4.500v14l-4-4.500h-3zM71 9q2 3 0 6M74 7q4 5 0 10M77 5q5 7 0 14" fill="none" stroke="#fff" stroke-width="1.200" /><path d="M93 19q1-12 14-13" stroke="#888" fill="none" stroke-width="1.400" /><path d="M97 19q1-8 10-9M101 19q1-4 6-5" stroke="#fff" fill="none" stroke-width="1.400" /><circle cx="106" cy="18" r="1.500" fill="#fff" /></svg>
      <span class="clock"><span>20:35</span><span>24/02/2025</span></span>
      <svg class="notif" viewBox="0 0 22 22"><path d="M1.500 1.500h19v15h-6l-3.500 4v-4H1.500z" fill="none" stroke="#fff" stroke-width="1.400" /></svg>
      <i class="peek"></i>
    </footer>

    <svg class="defs" width="0" height="0">
      <g id="dock-buttons">
        <path d="M2.500.5h9q2 0 2 2v9.500q0 2-2 2h-9q-2 0-2-2V2.500q0-2 2-2zM18.500.5h9q2 0 2 2v9.500q0 2-2 2h-9q-2 0-2-2V2.500q0-2 2-2z" fill="#f8f8f8" stroke="#888" />
        <path d="M3.500 6h5v5h-5zM5.500 5.500v-2.500h5v5H9M3 6.500h6M5 3.500h6M19.500 3.500l7 7M26.500 3.500l-7 7" fill="none" stroke="#000" stroke-width="1.400" />
      </g>
    </svg>
  </div>
</template>

<style>
html, body { margin: 0; overflow: hidden; }
</style>
<style scoped>
.win { width: 1920px; height: 1080px; display: flex; flex-direction: column; background: #f0f0f0; font: 12.5px/16px "DejaVu Sans Condensed", "DejaVu Sans", sans-serif; font-stretch: condensed; color: #000; overflow: hidden; }
.win * { box-sizing: border-box; }
i { display: block; flex: none; font-style: normal; }
svg { display: block; flex: none; }
.defs { position: absolute; }
.title { height: 30px; flex: none; background: #fff; display: flex; align-items: center; font: 15px/20px "Open Sans", "Noto Sans", sans-serif; padding-bottom: 2px; }
.logo { width: 16px; height: 20px; margin-left: 4px; }
.name { margin-left: 7px; letter-spacing: -.55px; flex: 1; }
.wbtn { width: 150px; height: 20px; margin: 0 5px 0 0; }
.menu { height: 25px; flex: none; display: flex; padding: 5px 0 0 10px; border-bottom: 1px solid #b4b4b4; font-size: 13px; letter-spacing: -.18px; white-space: nowrap; }
.bar { height: 39px; flex: none; display: flex; align-items: center; border-top: 1px solid #fafafa; border-bottom: 1px solid #b4b4b4; padding-bottom: 1px; }
.tool { flex: none; width: 24px; height: 24px; }
.tool svg { width: 24px; height: 24px; overflow: visible; }
.tool.active { width: 34px; height: 34px; border: 1px solid #808080; border-radius: 3px; background: #d5d5d5; padding: 4px; }
.grip-v { width: 6px; height: 29px; background: radial-gradient(circle at 1.5px 1.5px, #b8b8b8 1px, transparent 1.4px) 0 0 / 6px 6px, radial-gradient(circle at 4.500px 4.500px, #b8b8b8 1px, transparent 1.4px) 0 0 / 6px 6px; }
.grip-h { height: 6px; background: radial-gradient(circle at 1.5px 1.5px, #b8b8b8 1px, transparent 1.4px) 0 0 / 6px 6px, radial-gradient(circle at 4.500px 4.500px, #b8b8b8 1px, transparent 1.4px) 0 0 / 6px 6px; }
.down { width: 10px; height: 5px; background: #000; clip-path: polygon(0 0, 100% 0, 50% 100%); }
.down.dim { background: #9a9a9a; }
.work { flex: none; height: 863px; display: flex; }
.side { width: 55px; flex: none; border-right: 1px solid #b4b4b4; padding-top: 6px; }
.side .grip-h { width: 48px; margin-left: 3px; }
.side .grip-h.second { margin: 8px 0 0 3px; }
.stool { display: flex; align-items: center; height: 34px; padding-left: 15px; }
.side .grip-h:first-child + .stool { margin-top: -1px; }
.stool svg { width: 24px; height: 24px; }
.stool.split { padding-left: 8px; }
.stool .down { margin-left: 7px; }
.docks { width: 316px; flex: none; margin-left: 1px; display: flex; flex-direction: column; }
.dtitle { height: 20px; margin-top: 1px; display: flex; align-items: center; flex: none; padding-left: 2px; }
.dtitle .grip-h { flex: 1; }
.dtitle b { font-weight: 400; margin: 0 5px 0 7px; letter-spacing: -.25px; padding-top: 2px; }
.dbtns { width: 31px; height: 15px; margin: -3px 1px 0 4px; }
.dtools { display: flex; height: 16px; margin: 8px 0 0 7px; align-items: center; gap: 11px; flex: none; }
.dtools svg { width: 16px; height: 16px; overflow: visible; }
.dtools .down { margin: 0 -3px 0 -4px; }
.box { background: #fff; border: 1px solid #aaa; border-radius: 2px; width: 316px; flex: none; overflow: hidden; }
.explorer { margin-top: 14px; height: 106px; display: flex; }
.tree { flex: 1; }
.row { display: flex; align-items: center; flex: none; letter-spacing: -.1px; }
.branch { width: 10px; margin-left: 10px; align-self: stretch; border-left: 1px dotted #aaa; background: linear-gradient(90deg, #aaa 50%, transparent 0) 0 50% / 3px 1px repeat-x; display: flex; align-items: center; }
.plus { width: 9px; height: 9px; margin: -2px 0 0 -6px; border: 1px solid #888; background: linear-gradient(#333, #333) 50% 50% / 5px 1px no-repeat, linear-gradient(#333, #333) 50% 50% / 1px 5px no-repeat, #fff; }
.ticon { width: 16px; height: 16px; margin: 0 5px 0 4px; }
.ticon.big { width: 20px; height: 19px; margin: 0 6px 0 3px; }
.scroll { width: 16px; display: flex; flex-direction: column; margin-right: 1px; }
.sb { height: 16px; border: 1px solid #999; border-radius: 2px; background: #f6f6f6; position: relative; }
.sb::after { content: ""; display: block; width: 8px; height: 4px; background: #000; margin: 5px auto 0; clip-path: polygon(50% 0, 100% 100%, 0 100%); }
.sb.dn::after { clip-path: polygon(0 0, 100% 0, 50% 100%); }
.thumb { height: 26px; border: 1px solid #999; border-radius: 1px; background: linear-gradient(90deg, #fafafa, #dedede); }
.track { flex: 1; background: #ececec; }
.mid { width: 103px; margin: 2px 0 0 105px; height: 4px; }
.dtitle.two { margin-top: 2px; }
.dtools.two { margin-top: 8px; }
.layers { margin-top: 14px; height: 196px; font-weight: 700; padding-top: 1px; }
.layers .row { height: 18px; letter-spacing: .2px; }
.layers .last .branch { height: 9px; align-self: flex-start; background: linear-gradient(90deg, #aaa 50%, transparent 0) 0 100% / 3px 1px repeat-x; }
.lic { width: 16px; height: 16px; margin: 0 6px 0 3px; }
u { text-underline-offset: 2px; }
.chk { width: 15px; height: 15px; border: 1px solid #bbb; background: #fff; padding: 1px; margin-left: 3px; flex: none; }
.chk svg { width: 11px; height: 11px; }
.pin { width: 10px; height: 10px; border: 1px solid #333; border-radius: 50%; background: #d670ee; margin: 0 11px 0 12px; }
.swatch { width: 18px; height: 16px; background: #55b36c; border: solid #2c3c2c; border-width: 0 1px; margin: 0 6px 0 7px; }
.low { margin-top: 1px; }
.dtitle.three { margin-top: 3px; }
.form { padding: 7px 9px 0 8px; display: flex; flex-direction: column; letter-spacing: -.25px; }
.cap { height: 24px; line-height: 23px; }
.cap.second { margin-top: 3px; }
.line { display: flex; align-items: center; height: 22px; margin-bottom: 7px; flex: none; }
.line.tall { height: 29px; margin: 0; gap: 7px; }
.field, .fld { background: #fff; border: 1px solid #aaa; border-radius: 2px; height: 22px; }
.field { flex: 1; }
.btn { border: 1px solid #aaa; border-radius: 2px; background: linear-gradient(#fbfbfb, #dcdcdc); display: flex; align-items: center; justify-content: center; }
.cap-btn { width: 30px; height: 29px; border-color: #888; background: linear-gradient(#fff, #ececec); }
.cap-btn svg { width: 20px; height: 20px; }
.crit { margin-top: 8px; justify-content: space-between; }
.combo { width: 147px; height: 22px; justify-content: space-between; padding-left: 4px; }
.arrow { width: 16px; align-self: stretch; border-left: 1px solid #aaa; display: flex; align-items: center; justify-content: center; }
.arrow .down { width: 8px; height: 5px; }
.len { flex: none; width: 241px; margin-left: auto; }
.tmp { flex: none; width: 257px; margin-left: auto; }
.acts { display: flex; gap: 10px; margin-top: 2px; }
.acts .btn { flex: 1; height: 28px; }
.aide { height: 31px; margin-top: 9px; gap: 4px; }
.aide svg { width: 21px; height: 21px; }
.vsplit { width: 6px; height: 282px; margin-top: 288px; background: radial-gradient(circle at 3.500px 1.500px, #b8b8b8 1px, transparent 1.4px) 0 0 / 6px 4px; }
.canvas { flex: 1; height: 863px; border: 2px solid #2b8bdb; border-top-color: #0a6cba; background: #fff; overflow: hidden; }
.land { fill: #55b36c; stroke: #000; stroke-width: 1.3; stroke-linejoin: round; }
.edge { fill: none; stroke: #000; stroke-width: 1.3; stroke-linejoin: round; }
.dot { fill: #d670ee; stroke: #1a1a1a; stroke-width: 1.1; }
.status { height: 34px; flex: none; display: flex; align-items: center; font-size: 13px; letter-spacing: -.1px; white-space: nowrap; padding-top: 1px; }
.status > * { flex: none; }
.s1 { width: 59px; margin-left: 981px; }
.extent { width: 297px; text-align: center; line-height: 20px; }
.ext { width: 19px; height: 29px; border-color: #888; background: #d0d0d0; }
.ext svg { width: 14px; height: 14px; }
.s2 { width: 53px; margin-left: 10px; letter-spacing: -.4px; }
.scale { width: 97px; display: flex; justify-content: space-between; padding-left: 4px; line-height: 20px; letter-spacing: -.3px; }
.s3 { width: 56px; margin-left: 10px; }
.rot { width: 108px; height: 29px; display: flex; justify-content: space-between; padding-left: 4px; line-height: 28px; }
.spin { width: 16px; height: 29px; margin: -1px -1px 0 0; }
.spin .sb { height: 14px; }
.spin .sb::after { margin-top: 4px; }
.status .chk { margin-left: 6px; }
.s4 { width: 55px; margin-left: 6px; }
.crs { width: 18px; height: 18px; }
.s5 { margin-left: 6px; width: 87px; }
.msg { width: 20px; height: 18px; margin-top: 0; }
.task { height: 50px; flex: none; display: flex; align-items: center; color: #fff; background: linear-gradient(90deg, #1d1d1d 0 560px, #33241c 630px, #332218 820px, #241d20 960px, #32231a 1270px, #1d1d1d 1370px); font: 17px/22px "Open Sans", "Noto Sans", sans-serif; white-space: nowrap; }
.task > * { flex: none; }
.t { display: flex; justify-content: center; align-items: center; height: 50px; width: 60px; }
.t svg { width: 28px; height: 28px; }
.t .tall-ic { width: 30px; height: 30px; }
.win-ic svg, .view-ic svg { width: 20px; height: 20px; }
.app { width: 51px; margin-right: 11px; border-bottom: 3px solid #76b9ed; padding-top: 2px; }
.exp { margin-left: 8px; }
.exp { border-image: linear-gradient(90deg, #76b9ed 40px, #5486b0 40px) 3; border-width: 0 0 3px; }
.cur { width: 61px; margin-left: -5px; margin-right: 6px; background: #4a4a4a; }
.weather { margin-left: 874px; }
.weather svg { width: 30px; height: 32px; }
.wtext { margin-left: 11px; letter-spacing: -.2px; width: 38px; }
.wtext.sky { width: 96px; margin-left: 9px; letter-spacing: .12px; }
.tray { width: 120px; height: 24px; margin-left: 28px; }
.clock { display: flex; flex-direction: column; align-items: center; width: 84px; margin-left: -3px; font-size: 15px; line-height: 23px; letter-spacing: -.4px; }
.notif { width: 22px; height: 22px; margin-left: 19px; }
.peek { width: 1px; height: 50px; background: #555; margin-left: 24px; }
</style>
